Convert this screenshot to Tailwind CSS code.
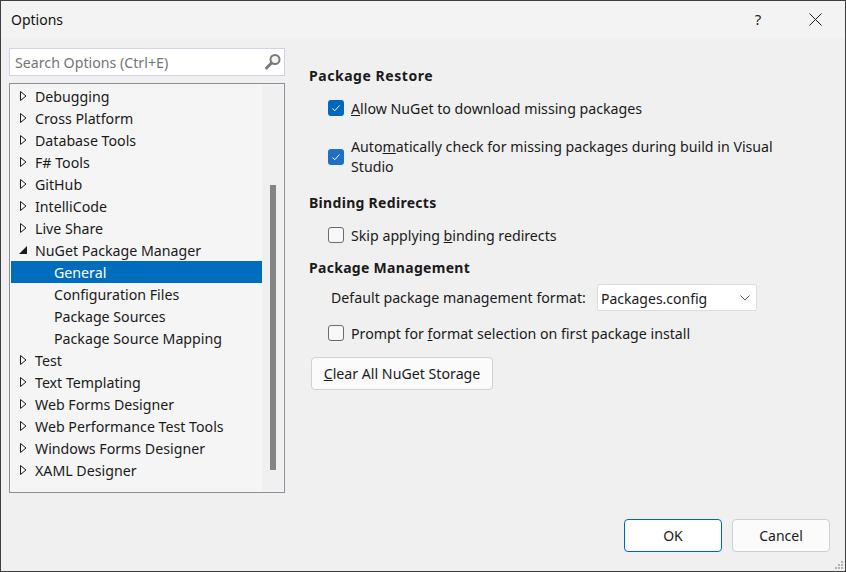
<!DOCTYPE html>
<html><head><meta charset="utf-8"><script src="https://cdn.jsdelivr.net/npm/@tailwindcss/browser@4"></script></head>
<body class="m-0 bg-[#f0f0f0]">
<div class="w-[846px] h-[572px] overflow-hidden relative flex flex-col border border-[#3f3f3f] bg-[#f0f0f0] font-['Noto_Sans',sans-serif] text-[14.2px] text-[#1a1a1a]">
  <div class="h-[37px] shrink-0 bg-[#f3f3f3] flex items-center pl-[10px]">
    <span class="flex-1 text-[14px] text-[#111] leading-[37px]">Options</span>
    <span class="w-[20px] text-center text-[15px] mr-[41px] text-[#222]">?</span>
    <svg class="w-[13px] h-[13px] mr-[23px]" viewBox="0 0 13 13"><path d="M.5.5l12 12M12.5.5l-12 12" stroke="#1c1c1c" stroke-width="1" fill="none"/></svg>
  </div>
  <div class="flex flex-1 min-h-0">
    <div class="w-[276px] ml-[8px] mt-[10px] shrink-0 flex flex-col">
      <div class="h-[28px] flex items-center bg-white border border-[#d2d2e6] pl-[5px] pr-[2px]">
        <span class="flex-1 pt-[2px] text-[#757575] whitespace-nowrap">Search Options (Ctrl+E)</span>
        <svg class="w-[18px] h-[18px]" viewBox="0 0 18 18"><circle cx="11" cy="6.500" r="4.500" fill="#f4f4f4" stroke="#7a7a7a" stroke-width="2"/><path d="M7.500 10l-5 5" stroke="#7a7a7a" stroke-width="3" stroke-linecap="round"/></svg>
      </div>
      <div class="mt-[7px] h-[410px] border border-[#8a8f99] bg-[#f5f5f5] flex p-px">
        <div class="flex-1 min-w-0 [&_span]:pt-[2px]">
          <div class="flex items-center h-[22px] pl-[8px]"><svg class="w-[9px] h-[12px] mr-[7px]" viewBox="0 0 9 12"><path d="M1.500 1.500l5.500 4.500-5.500 4.500z" fill="none" stroke="#1c1c1c"/></svg><span>Debugging</span></div>
          <div class="flex items-center h-[22px] pl-[8px]"><svg class="w-[9px] h-[12px] mr-[7px]" viewBox="0 0 9 12"><path d="M1.500 1.500l5.500 4.500-5.500 4.500z" fill="none" stroke="#1c1c1c"/></svg><span>Cross Platform</span></div>
          <div class="flex items-center h-[22px] pl-[8px]"><svg class="w-[9px] h-[12px] mr-[7px]" viewBox="0 0 9 12"><path d="M1.500 1.500l5.500 4.500-5.500 4.500z" fill="none" stroke="#1c1c1c"/></svg><span>Database Tools</span></div>
          <div class="flex items-center h-[22px] pl-[8px]"><svg class="w-[9px] h-[12px] mr-[7px]" viewBox="0 0 9 12"><path d="M1.500 1.500l5.500 4.500-5.500 4.500z" fill="none" stroke="#1c1c1c"/></svg><span>F# Tools</span></div>
          <div class="flex items-center h-[22px] pl-[8px]"><svg class="w-[9px] h-[12px] mr-[7px]" viewBox="0 0 9 12"><path d="M1.500 1.500l5.500 4.500-5.500 4.500z" fill="none" stroke="#1c1c1c"/></svg><span>GitHub</span></div>
          <div class="flex items-center h-[22px] pl-[8px]"><svg class="w-[9px] h-[12px] mr-[7px]" viewBox="0 0 9 12"><path d="M1.500 1.500l5.500 4.500-5.500 4.500z" fill="none" stroke="#1c1c1c"/></svg><span>IntelliCode</span></div>
          <div class="flex items-center h-[22px] pl-[8px]"><svg class="w-[9px] h-[12px] mr-[7px]" viewBox="0 0 9 12"><path d="M1.500 1.500l5.500 4.500-5.500 4.500z" fill="none" stroke="#1c1c1c"/></svg><span>Live Share</span></div>
          <div class="flex items-center h-[22px] pl-[8px]"><svg class="w-[9px] h-[12px] mr-[7px]" viewBox="0 0 9 12"><path d="M0 10h8V2z" fill="#1c1c1c"/></svg><span>NuGet Package Manager</span></div>
          <div class="flex items-center h-[22px] pl-[43px] bg-[#006cbe] text-white"><span>General</span></div>
          <div class="flex items-center h-[22px] pl-[43px]"><span>Configuration Files</span></div>
          <div class="flex items-center h-[22px] pl-[43px]"><span>Package Sources</span></div>
          <div class="flex items-center h-[22px] pl-[43px]"><span>Package Source Mapping</span></div>
          <div class="flex items-center h-[22px] pl-[8px]"><svg class="w-[9px] h-[12px] mr-[7px]" viewBox="0 0 9 12"><path d="M1.500 1.500l5.500 4.500-5.500 4.500z" fill="none" stroke="#1c1c1c"/></svg><span>Test</span></div>
          <div class="flex items-center h-[22px] pl-[8px]"><svg class="w-[9px] h-[12px] mr-[7px]" viewBox="0 0 9 12"><path d="M1.500 1.500l5.500 4.500-5.500 4.500z" fill="none" stroke="#1c1c1c"/></svg><span>Text Templating</span></div>
          <div class="flex items-center h-[22px] pl-[8px]"><svg class="w-[9px] h-[12px] mr-[7px]" viewBox="0 0 9 12"><path d="M1.500 1.500l5.500 4.500-5.500 4.500z" fill="none" stroke="#1c1c1c"/></svg><span>Web Forms Designer</span></div>
          <div class="flex items-center h-[22px] pl-[8px]"><svg class="w-[9px] h-[12px] mr-[7px]" viewBox="0 0 9 12"><path d="M1.500 1.500l5.500 4.500-5.500 4.500z" fill="none" stroke="#1c1c1c"/></svg><span>Web Performance Test Tools</span></div>
          <div class="flex items-center h-[22px] pl-[8px]"><svg class="w-[9px] h-[12px] mr-[7px]" viewBox="0 0 9 12"><path d="M1.500 1.500l5.500 4.500-5.500 4.500z" fill="none" stroke="#1c1c1c"/></svg><span>Windows Forms Designer</span></div>
          <div class="flex items-center h-[22px] pl-[8px]"><svg class="w-[9px] h-[12px] mr-[7px]" viewBox="0 0 9 12"><path d="M1.500 1.500l5.500 4.500-5.500 4.500z" fill="none" stroke="#1c1c1c"/></svg><span>XAML Designer</span></div>
        </div>
        <div class="w-[21px] shrink-0 bg-[#f0f0f0] pl-[8px] pt-[100px]"><div class="w-[6px] h-[285px] bg-[#858585]"></div></div>
      </div>
    </div>
    <div class="ml-[24px] flex-1 min-w-0 pt-[28px]">
      <div class="font-bold text-[14px] tracking-[0.55px] h-[20px] leading-[20px]">Package Restore</div>
      <div class="flex items-center h-[22px] ml-[19px] mt-[11px]">
        <span class="w-[16px] h-[16px] rounded-[3px] bg-[#0067c0] mr-[7px] flex items-center justify-center"><svg class="w-[10px] h-[10px]" viewBox="0 0 10 10"><path d="M1.500 5.500l2.300 2.200L8.500 2.500" stroke="#fff" fill="none"/></svg></span>
        <span class="pt-[2px] whitespace-nowrap"><span class="underline">A</span>llow NuGet to download missing packages</span>
      </div>
      <div class="flex items-center ml-[19px] mt-[17px] w-[445px] h-[42px]">
        <span class="w-[16px] h-[16px] shrink-0 rounded-[3px] bg-[#1f70c4] mr-[7px] flex items-center justify-center"><svg class="w-[10px] h-[10px]" viewBox="0 0 10 10"><path d="M1.500 5.500l2.300 2.200L8.500 2.500" stroke="#fff" fill="none"/></svg></span>
        <span class="leading-[20.5px]">Auto<span class="underline">m</span>atically check for missing packages during build in Visual Studio</span>
      </div>
      <div class="font-bold text-[14px] tracking-[0.3px] h-[20px] leading-[20px] mt-[15px]">Binding Redirects</div>
      <div class="flex items-center h-[22px] ml-[19px] mt-[11px]">
        <span class="w-[16px] h-[16px] rounded-[3px] bg-[#f7f7f7] border border-[#6b6b6b] mr-[7px]"></span>
        <span class="pt-[2px]">Skip applying <span class="underline">b</span>inding redirects</span>
      </div>
      <div class="font-bold text-[14px] tracking-[0.3px] h-[20px] leading-[20px] mt-[12px]">Package Management</div>
      <div class="flex items-center ml-[22px] mt-[6px] h-[27px]">
        <span class="w-[266px] whitespace-nowrap">Default package management format:</span>
        <span class="w-[160px] h-[27px] bg-white border border-[#dcdcdc] rounded-[2px] flex items-center pl-[3px] pr-[6px] text-[14px]">
          <span class="flex-1 pt-[2px]">Packages.config</span>
          <svg class="w-[10px] h-[6px]" viewBox="0 0 10 6"><path d="M.5.5L5 5 9.500.5" stroke="#555" fill="none"/></svg>
        </span>
      </div>
      <div class="flex items-center h-[22px] ml-[19px] mt-[11px]">
        <span class="w-[16px] h-[16px] rounded-[3px] bg-[#f7f7f7] border border-[#6b6b6b] mr-[7px]"></span>
        <span class="pt-[2px]">Prompt for <span class="underline">f</span>ormat selection on first package install</span>
      </div>
      <button class="block ml-[2px] mt-[13px] w-[182px] h-[33px] bg-[#fbfbfb] border border-[#d0d0d0] rounded-[4px] text-center"><span class="underline">C</span>lear All NuGet Storage</button>
    </div>
  </div>
  <div class="absolute right-[15px] bottom-[19px] flex gap-[10px] text-[14px]">
    <button class="w-[98px] h-[33px] bg-white border border-[#0067c0] rounded-[4px]">OK</button>
    <button class="w-[98px] h-[33px] bg-[#fbfbfb] border border-[#cfcfcf] rounded-[4px]">Cancel</button>
  </div>
  <svg class="absolute right-[1px] bottom-[1px] w-[10px] h-[10px]" viewBox="0 0 10 10" fill="#b4b4b4"><rect x="7" y="1" width="2" height="2"/><rect x="4" y="4" width="2" height="2"/><rect x="7" y="4" width="2" height="2"/><rect x="1" y="7" width="2" height="2"/><rect x="4" y="7" width="2" height="2"/><rect x="7" y="7" width="2" height="2"/></svg>
</div>
</body></html>
